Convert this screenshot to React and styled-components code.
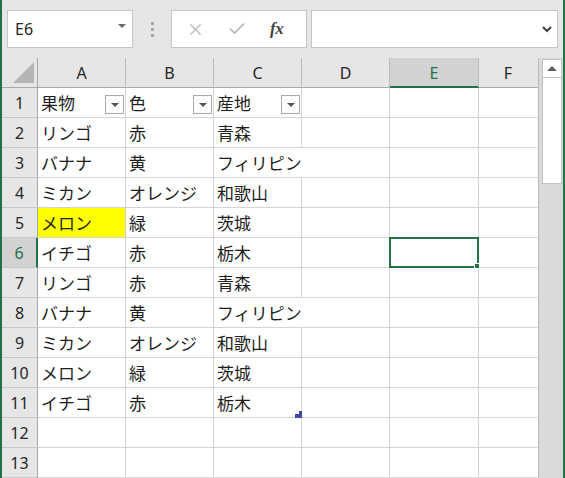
import React from "react";
import styled, { createGlobalStyle } from "styled-components";
import { X, Check } from "lucide-react";

const Global = createGlobalStyle`
  html, body { margin: 0; padding: 0; background: #ffffff; }
  * { box-sizing: border-box; }
`;

const GREEN = "#217346";

const Root = styled.div`
  width: 565px;
  height: 478px;
  overflow: hidden;
  border-left: 2px solid ${GREEN};
  border-right: 2px solid ${GREEN};
  background: #e6e6e6;
  display: flex;
  flex-direction: column;
  font-family: "Noto Sans", "Liberation Sans", sans-serif;
`;

const TopBar = styled.div`
  height: 58px;
  flex: none;
  display: flex;
  align-items: flex-start;
  padding: 10px 0 0 5px;
  background: #e6e6e6;
`;

const NameBox = styled.div`
  width: 126px;
  height: 38px;
  background: #fff;
  border: 1px solid #c6c6c6;
  display: flex;
  align-items: center;
  justify-content: space-between;
  padding: 0 6px 0 7px;
  font-family: "Noto Sans", "Liberation Sans", sans-serif;
  font-size: 16px;
  color: #262626;
`;

const SmallTri = styled.span`
  width: 0;
  height: 0;
  border-left: 4px solid transparent;
  border-right: 4px solid transparent;
  border-top: 4px solid #6a6a6a;
  margin-top: -6px;
`;

const Dots = styled.div`
  width: 38px;
  height: 38px;
  display: flex;
  flex-direction: column;
  align-items: center;
  justify-content: center;
  gap: 3px;
  & > span {
    width: 3px;
    height: 3px;
    background: #a6a6a6;
  }
`;

const IconBox = styled.div`
  width: 136px;
  height: 38px;
  background: #fff;
  border: 1px solid #c6c6c6;
  display: flex;
  align-items: center;
  padding: 0 0 0 14px;
  gap: 22px;
  color: #b5b5b5;
`;

const Fx = styled.span`
  font-family: "Liberation Serif", "DejaVu Serif", serif;
  font-style: italic;
  font-weight: bold;
  font-size: 17px;
  color: #444;
  letter-spacing: -0.5px;
  margin-left: 1px;
`;

const FormulaInput = styled.div`
  margin-left: 4px;
  width: 247px;
  height: 38px;
  background: #fff;
  border: 1px solid #c6c6c6;
  display: flex;
  align-items: center;
  justify-content: flex-end;
  padding-right: 4px;
  color: #333;
`;

const Main = styled.div`
  flex: 1;
  display: flex;
  min-height: 0;
`;

const Sheet = styled.div`
  width: 536px;
  display: grid;
  grid-template-columns: 36px 88px 88px 88px 88px 89px 59px;
  grid-auto-rows: 30px;
  background: #fff;
`;

const Corner = styled.div`
  background: #e6e6e6;
  border-right: 1px solid #a8a8a8;
  border-bottom: 1px solid #a8a8a8;
  display: flex;
  align-items: flex-end;
  justify-content: flex-end;
  padding: 0 3px 4px 0;
`;

const CornerTri = styled.span`
  width: 0;
  height: 0;
  border-left: 21px solid transparent;
  border-bottom: 21px solid #b4b4b4;
`;

const ColHead = styled.div`
  background: ${(p) => (p.$active ? "#d2d2d2" : "#e6e6e6")};
  border-right: 1px solid ${(p) => (p.$last ? "transparent" : "#bdbdbd")};
  border-bottom: ${(p) => (p.$active ? `2px solid ${GREEN}` : "1px solid #a8a8a8")};
  display: flex;
  align-items: center;
  justify-content: center;
  font-size: 16px;
  color: ${(p) => (p.$active ? GREEN : "#262626")};
  padding-top: ${(p) => (p.$active ? "1px" : "0")};
`;

const RowHead = styled.div`
  background: ${(p) => (p.$active ? "#d2d2d2" : "#e6e6e6")};
  border-right: ${(p) => (p.$active ? `2px solid ${GREEN}` : "1px solid #a8a8a8")};
  border-bottom: 1px solid #c8c8c8;
  display: flex;
  align-items: center;
  justify-content: center;
  font-size: 16px;
  color: ${(p) => (p.$active ? GREEN : "#262626")};
`;

const Cell = styled.div`
  position: relative;
  background: ${(p) => p.$fill || "#fff"};
  border-right: 1px solid ${(p) => (p.$spill || p.$last ? "transparent" : "#d4d4d4")};
  border-bottom: 1px solid #d4d4d4;
  display: flex;
  align-items: center;
  padding-left: 3px;
  white-space: nowrap;
  font-family: "Noto Sans CJK JP", "Noto Sans", sans-serif;
  font-size: 17px;
  color: #1e1e1e;
`;

const FilterBtn = styled.span`
  position: absolute;
  right: 1px;
  bottom: 3px;
  width: 19px;
  height: 19px;
  background: #fbfbfb;
  border: 1px solid #ababab;
  display: flex;
  align-items: center;
  justify-content: center;
  &::after {
    content: "";
    width: 0;
    height: 0;
    border-left: 4px solid transparent;
    border-right: 4px solid transparent;
    border-top: 4px solid #555;
  }
`;

const Selection = styled.span`
  position: absolute;
  left: -1px;
  top: -1px;
  right: -1px;
  bottom: -1px;
  border: 2px solid ${GREEN};
  pointer-events: none;
`;

const FillHandle = styled.span`
  position: absolute;
  right: -4px;
  bottom: -4px;
  width: 7px;
  height: 7px;
  background: ${GREEN};
  border: 1px solid #fff;
`;

const ResizeMark = styled.svg`
  position: absolute;
  right: -1px;
  bottom: -1px;
`;

const Scrollbar = styled.div`
  width: 25px;
  background: #dadada;
  border-left: 1px solid #b8b8b8;
  padding: 1px 1px 0 3px;
  display: flex;
  flex-direction: column;
`;

const ScrollUp = styled.div`
  height: 19px;
  background: #fff;
  border: 1px solid #c2c2c2;
  display: flex;
  align-items: center;
  justify-content: center;
  &::after {
    content: "";
    width: 0;
    height: 0;
    border-left: 5px solid transparent;
    border-right: 5px solid transparent;
    border-bottom: 5px solid #606060;
  }
`;

const Thumb = styled.div`
  height: 106px;
  background: #fff;
  border: 1px solid #c2c2c2;
  border-top: none;
`;

const cols = ["A", "B", "C", "D", "E", "F"];

const data = [
  ["果物", "色", "産地"],
  ["リンゴ", "赤", "青森"],
  ["バナナ", "黄", "フィリピン"],
  ["ミカン", "オレンジ", "和歌山"],
  ["メロン", "緑", "茨城"],
  ["イチゴ", "赤", "栃木"],
  ["リンゴ", "赤", "青森"],
  ["バナナ", "黄", "フィリピン"],
  ["ミカン", "オレンジ", "和歌山"],
  ["メロン", "緑", "茨城"],
  ["イチゴ", "赤", "栃木"],
  [],
  [],
];

export default function App() {
  return (
    <>
      <Global />
      <Root>
        <TopBar>
          <NameBox>
            <span>E6</span>
            <SmallTri />
          </NameBox>
          <Dots>
            <span />
            <span />
            <span />
          </Dots>
          <IconBox>
            <X size={19} strokeWidth={1.6} />
            <Check size={20} strokeWidth={2} />
            <Fx>fx</Fx>
          </IconBox>
          <FormulaInput>
            <svg width="12" height="8" viewBox="0 0 12 8">
              <path d="M2 2 L6 6 L10 2" fill="none" stroke="#444" strokeWidth="2.2" />
            </svg>
          </FormulaInput>
        </TopBar>
        <Main>
          <Sheet>
            <Corner>
              <CornerTri />
            </Corner>
            {cols.map((c, i) => (
              <ColHead key={c} $active={c === "E"} $last={i === cols.length - 1}>
                {c}
              </ColHead>
            ))}
            {data.map((row, r) => {
              const rn = r + 1;
              return (
                <React.Fragment key={rn}>
                  <RowHead $active={rn === 6}>{rn}</RowHead>
                  {cols.map((c, ci) => {
                    const v = row[ci] || "";
                    const spill = ci === 2 && v === "フィリピン";
                    return (
                      <Cell
                        key={c}
                        $fill={rn === 5 && ci === 0 ? "#ffff00" : undefined}
                        $spill={spill}
                        $last={ci === cols.length - 1}
                      >
                        {v}
                        {rn === 1 && ci < 3 && <FilterBtn />}
                        {rn === 6 && c === "E" && (
                          <Selection>
                            <FillHandle />
                          </Selection>
                        )}
                        {rn === 11 && ci === 2 && (
                          <ResizeMark width="7" height="7" viewBox="0 0 7 7">
                            <path d="M4 0 H7 V7 H0 V3 H4 Z" fill="#3d4aa8" />
                          </ResizeMark>
                        )}
                      </Cell>
                    );
                  })}
                </React.Fragment>
              );
            })}
          </Sheet>
          <Scrollbar>
            <ScrollUp />
            <Thumb />
          </Scrollbar>
        </Main>
      </Root>
    </>
  );
}
